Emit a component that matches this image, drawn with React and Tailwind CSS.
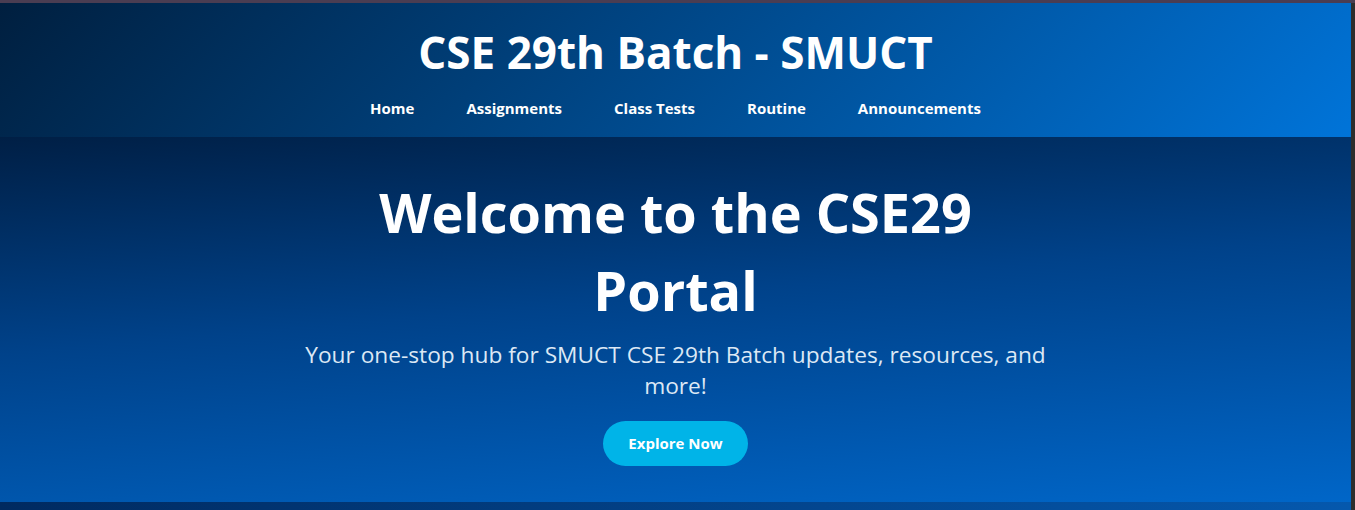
import React from 'react';

const links = ['Home', 'Assignments', 'Class Tests', 'Routine', 'Announcements'];

const App = () => {
  return (
    <div className="h-[510px] w-full overflow-hidden bg-[#4a3d52] pt-[3px] font-['Open_Sans',sans-serif] text-white">
      <div className="flex h-full">
        <div className="flex min-w-0 flex-1 flex-col">
          <header className="h-[134px] bg-[linear-gradient(135deg,#001f3f,#0074d9)] pt-[19px] text-center">
            <h1 className="text-[44px] font-bold leading-[60px]">CSE 29th Batch - SMUCT</h1>
            <nav className="mt-[16px] flex justify-center gap-[52px] text-[15px] font-bold">
              {links.map((l) => (
                <a key={l} href="#" className="leading-5">
                  {l}
                </a>
              ))}
            </nav>
          </header>

          <section className="flex h-[365px] flex-col items-center bg-[linear-gradient(175deg,#001f45_0%,#00428a_45%,#0066c8_100%)] pt-[36px] text-center">
            <div className="w-[780px]">
              <h2 className="mx-auto max-w-[640px] text-[54px] font-bold leading-[78px]">Welcome to the CSE29 Portal</h2>
              <p className="mt-[10px] text-[22.7px] leading-[31px] text-[#dce8f5]">
                Your one-stop hub for SMUCT CSE 29th Batch updates, resources, and more!
              </p>
              <button className="mt-[20px] h-[45px] w-[145px] rounded-full bg-[#00b4e8] text-[15px] font-bold text-white">
                Explore Now
              </button>
            </div>
          </section>

          <div className="flex-1 bg-[linear-gradient(90deg,#002a60,#0558ad)]" />
        </div>
        <div className="w-[4px] bg-[#2d2d2d]" />
      </div>
    </div>
  );
};

export default App;
